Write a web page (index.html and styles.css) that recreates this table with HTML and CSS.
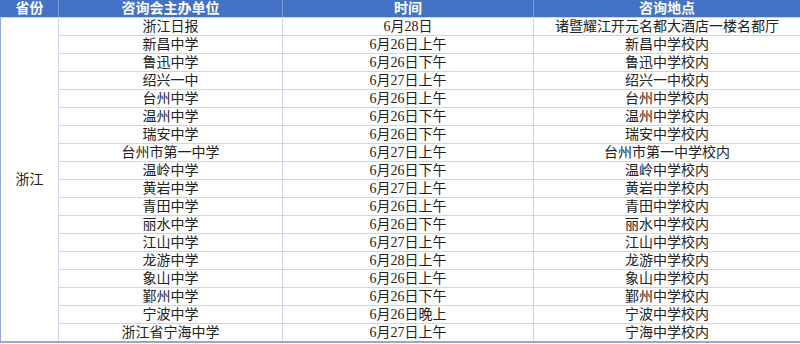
FILE: index.html
```html
<!DOCTYPE html>
<html lang="zh-CN">
<head>
<meta charset="utf-8">
<link rel="stylesheet" href="styles.css">
</head>
<body>
<table class="sched">
<colgroup>
<col class="c1"><col class="c2"><col class="c3"><col class="c4">
</colgroup>
<thead>
<tr><th>省份</th><th>咨询会主办单位</th><th>时间</th><th>咨询地点</th></tr>
</thead>
<tbody>
<tr><td rowspan="18" class="prov">浙江</td><td>浙江日报</td><td>6月28日</td><td>诸暨耀江开元名都大酒店一楼名都厅</td></tr>
<tr><td>新昌中学</td><td>6月26日上午</td><td>新昌中学校内</td></tr>
<tr><td>鲁迅中学</td><td>6月26日下午</td><td>鲁迅中学校内</td></tr>
<tr><td>绍兴一中</td><td>6月27日上午</td><td>绍兴一中校内</td></tr>
<tr><td>台州中学</td><td>6月26日上午</td><td>台州中学校内</td></tr>
<tr><td>温州中学</td><td>6月26日下午</td><td>温州中学校内</td></tr>
<tr><td>瑞安中学</td><td>6月26日下午</td><td>瑞安中学校内</td></tr>
<tr><td>台州市第一中学</td><td>6月27日上午</td><td>台州市第一中学校内</td></tr>
<tr><td>温岭中学</td><td>6月26日下午</td><td>温岭中学校内</td></tr>
<tr><td>黄岩中学</td><td>6月27日上午</td><td>黄岩中学校内</td></tr>
<tr><td>青田中学</td><td>6月26日上午</td><td>青田中学校内</td></tr>
<tr><td>丽水中学</td><td>6月26日下午</td><td>丽水中学校内</td></tr>
<tr><td>江山中学</td><td>6月27日上午</td><td>江山中学校内</td></tr>
<tr><td>龙游中学</td><td>6月28日上午</td><td>龙游中学校内</td></tr>
<tr><td>象山中学</td><td>6月26日上午</td><td>象山中学校内</td></tr>
<tr><td>鄞州中学</td><td>6月26日下午</td><td>鄞州中学校内</td></tr>
<tr><td>宁波中学</td><td>6月26日晚上</td><td>宁波中学校内</td></tr>
<tr><td>浙江省宁海中学</td><td>6月27日上午</td><td>宁海中学校内</td></tr>
</tbody>
</table>
</body>
</html>
```
FILE: styles.css
```css
html, body {
  margin: 0;
  padding: 0;
  background: #ffffff;
}
.sched {
  border-collapse: collapse;
  table-layout: fixed;
  width: 800px;
  font-family: "Liberation Serif", "Noto Sans CJK SC", serif;
  font-size: 14px;
  color: #222222;
}
.c1 { width: 58px; }
.c2 { width: 224px; }
.c3 { width: 251px; }
.c4 { width: 267px; }
.sched th, .sched td {
  height: 17px;
  padding: 0;
  line-height: 17px;
  text-align: center;
  white-space: nowrap;
  overflow: hidden;
}
.sched th {
  background: #4472c4;
  color: #ffffff;
  font-weight: bold;
  border-left: 1px solid #7f9ddb;
  border-right: 1px solid #7f9ddb;
  border-bottom: 1px solid #c5d3f0;
}
.sched th:first-child { border-left: 1px solid #4472c4; }
.sched th:last-child { border-right: 1px solid #4472c4; }
.sched td {
  border: 1px solid #c9d6f2;
}
.sched td.prov {
  border-left: 1px solid #8eaadb;
}
.sched tbody tr td:last-child {
  border-right: 1px solid #8eaadb;
}
.sched tbody tr:last-child td,
.sched td.prov {
  border-bottom: 2px solid #8eaadb;
}
```
